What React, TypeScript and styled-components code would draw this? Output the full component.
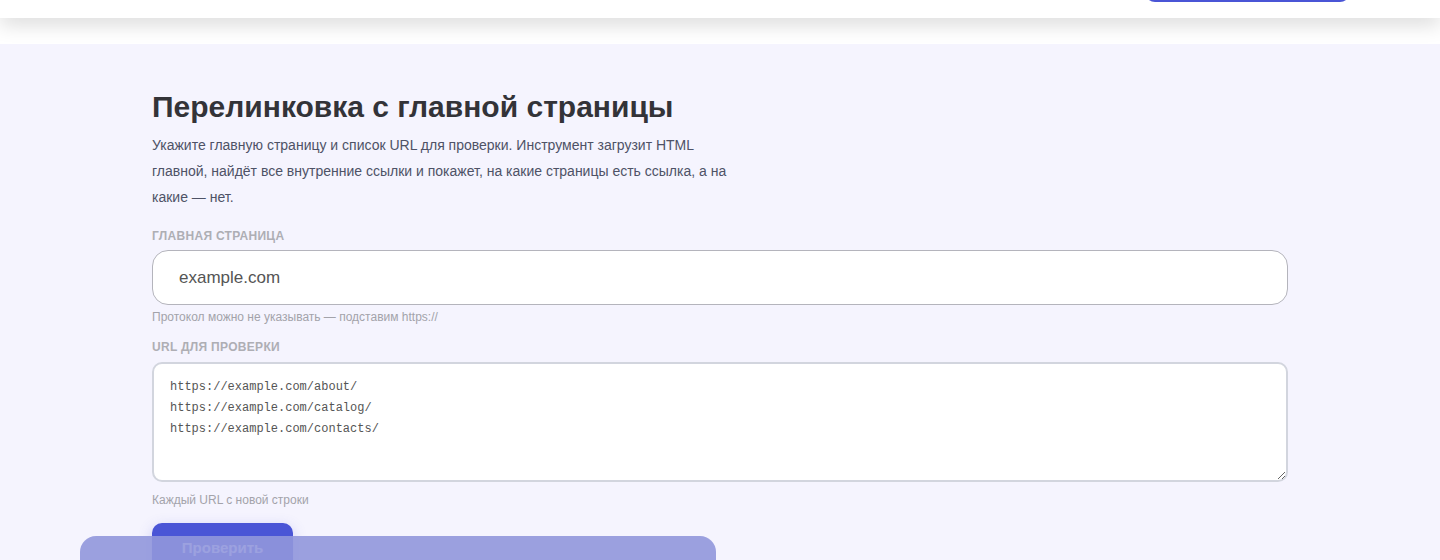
import React from 'react';
import styled, { createGlobalStyle } from 'styled-components';

const GlobalStyle = createGlobalStyle`
    * { box-sizing: border-box; }
    html, body { margin: 0; padding: 0; background: #fff; }
    body {
        font-family: "Liberation Sans", Arial, sans-serif;
        color: #333;
        height: 560px;
        overflow: hidden;
    }
`

export default function App() {
    return (
        <>
            <GlobalStyle />
            <Header>
                <HeaderButton aria-label="Меню" />
            </Header>
            <Main>
                <Container>
                    <Title>Перелинковка с главной страницы</Title>
                    <Lead>
                        Укажите главную страницу и список URL для проверки. Инструмент загрузит HTML
                        главной, найдёт все внутренние ссылки и покажет, на какие страницы есть ссылка, а на
                        какие — нет.
                    </Lead>

                    <Label htmlFor="home" $top={18}>Главная страница</Label>
                    <Input id="home" defaultValue="example.com" />
                    <Hint>Протокол можно не указывать — подставим https://</Hint>

                    <Label htmlFor="urls">URL для проверки</Label>
                    <TextArea
                        id="urls"
                        defaultValue={'https://example.com/about/\nhttps://example.com/catalog/\nhttps://example.com/contacts/'}
                    />
                    <Hint $top={10}>Каждый URL с новой строки</Hint>

                    <SubmitButton>Проверить</SubmitButton>
                </Container>
            </Main>
            <BottomBar />
        </>
    );
}

const Header = styled.header`
    height: 18px;
    background: #fff;
    display: flex;
    justify-content: flex-end;
    align-items: flex-end;
    padding: 0 90px 16px 0;
    overflow: hidden;
    box-shadow: 0 6px 20px rgba(0, 0, 0, 0.16);
    position: relative;
    z-index: 2;
`
const HeaderButton = styled.button`
    flex-shrink: 0;
    width: 205px;
    height: 40px;
    border: none;
    border-radius: 10px;
    background: #4a55d6;
`
const Main = styled.main`
    margin-top: 26px;
    background: #f5f4fe;
    height: 516px;
    overflow: hidden;
    padding-top: 45px;
`
const Container = styled.div`
    width: 1136px;
    margin-left: 152px;
    display: flex;
    flex-direction: column;
    align-items: flex-start;
`
const Title = styled.h1`
    margin: 0 0 7px;
    font-size: 30px;
    line-height: 36px;
    font-weight: 700;
    color: #333338;
`
const Lead = styled.p`
    margin: 0;
    max-width: 585px;
    font-size: 14px;
    line-height: 26px;
    color: #4e5266;
`
const Label = styled.label<{ $top?: number }>`
    margin-top: ${p => p.$top ?? 14}px;
    font-size: 12px;
    line-height: 16px;
    font-weight: 700;
    text-transform: uppercase;
    letter-spacing: 0.3px;
    color: #aeaeb4;
`
const Input = styled.input`
    margin-top: 6px;
    width: 100%;
    height: 55px;
    border: 1px solid #b4b4bc;
    border-radius: 16px;
    background: #fff;
    padding: 0 26px;
    font: 17px "Liberation Sans", Arial, sans-serif;
    color: #555;
    outline: none;
`
const Hint = styled.div<{ $top?: number }>`
    margin-top: ${p => p.$top ?? 4}px;
    font-size: 12px;
    line-height: 16px;
    color: #a3a3aa;
`
const TextArea = styled.textarea`
    margin-top: 7px;
    width: 100%;
    height: 120px;
    border: 2px solid #d2d5de;
    border-radius: 10px;
    background: #fff;
    padding: 13px 16px;
    font: 12px/21px "Liberation Mono", "DejaVu Sans Mono", monospace;
    color: #555;
    outline: none;
`
const SubmitButton = styled.button`
    flex-shrink: 0;
    margin-top: 15px;
    width: 141px;
    height: 48px;
    border: none;
    border-radius: 10px;
    background: #4a55d6;
    color: #fff;
    font: 700 15px "Liberation Sans", Arial, sans-serif;
    box-shadow: 0 4px 14px rgba(74, 85, 214, 0.25);
`
const BottomBar = styled.div`
    position: fixed;
    left: 80px;
    top: 536px;
    width: 636px;
    height: 60px;
    border-radius: 16px 16px 0 0;
    background: rgba(145, 151, 220, 0.9);
    z-index: 5;
`
